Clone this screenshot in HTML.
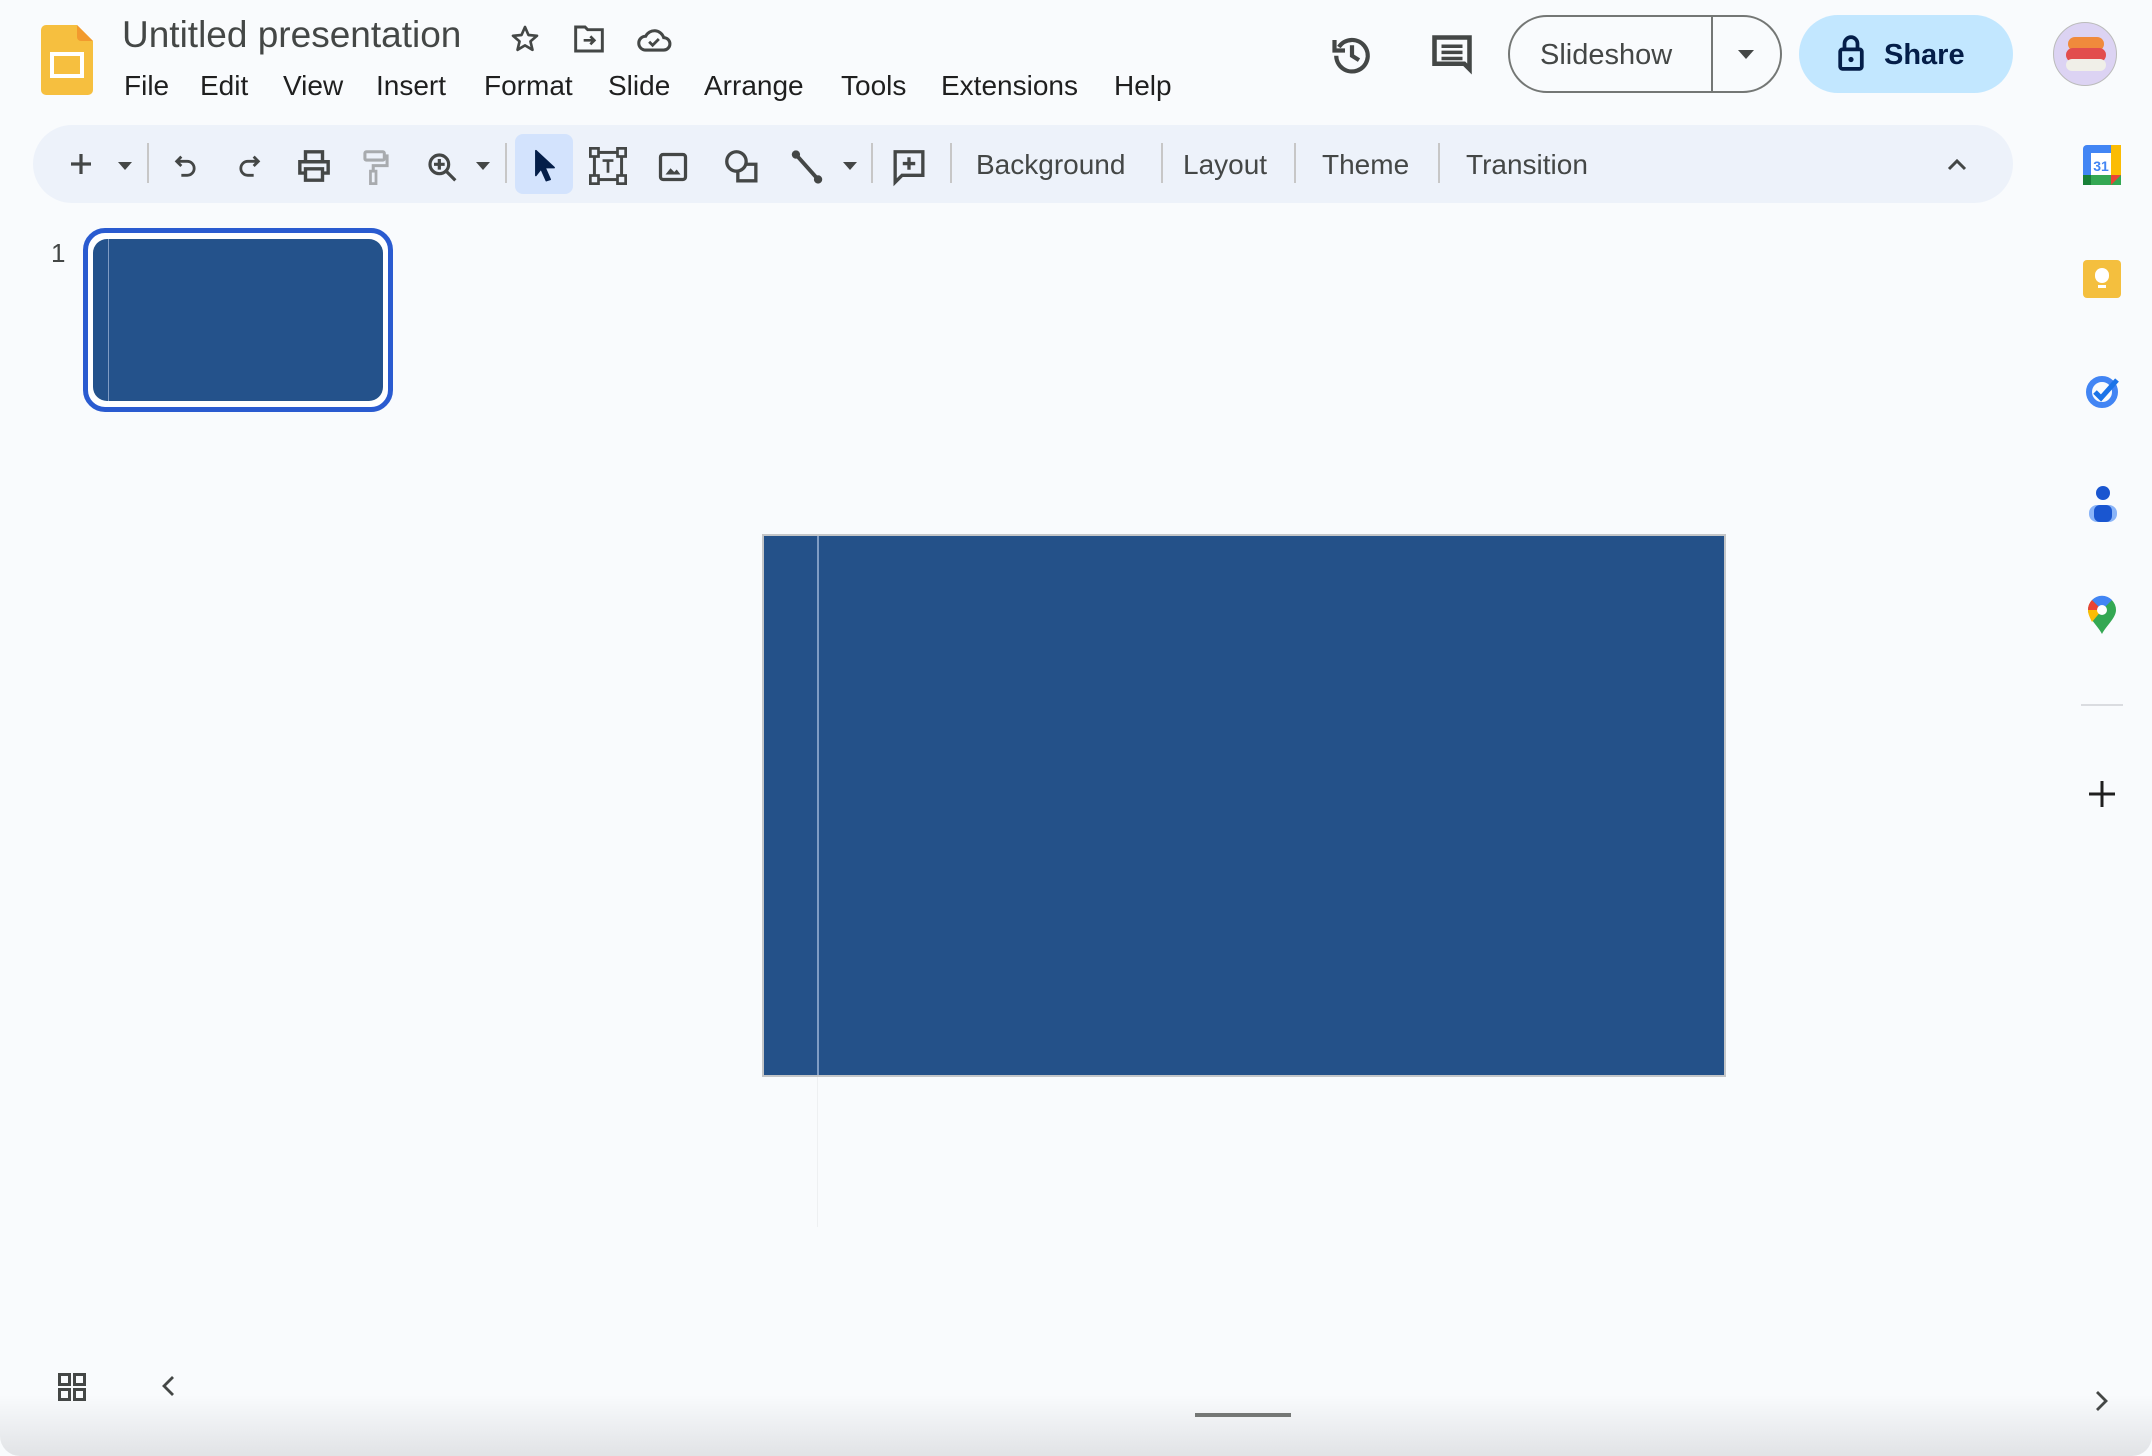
<!DOCTYPE html>
<html><head><meta charset="utf-8"><style>
*{margin:0;padding:0;box-sizing:border-box}
body{width:2152px;height:1456px;background:#f9fbfd;position:relative;overflow:hidden;font-family:"Liberation Sans",sans-serif;color:#1f1f1f}
.a{position:absolute}
.menu{position:absolute;top:70px;font-size:28px;color:#1f1f1f}
.tb{position:absolute;top:149px;font-size:28px;color:#444746}
.sep{position:absolute;top:143px;width:2px;height:40px;background:#c7c7c7}
svg{position:absolute;overflow:visible}
</style></head><body>
<svg style="left:41px;top:25px" width="52" height="70" viewBox="0 0 52 70"><path d="M5 0H36L52 16V65a5 5 0 0 1-5 5H5a5 5 0 0 1-5-5V5a5 5 0 0 1 5-5z" fill="#f6bf3f"/><path d="M36 0L52 16H40a4 4 0 0 1-4-4z" fill="#f29a2e"/><rect x="11" y="29" width="30" height="22" fill="none" stroke="#fff" stroke-width="4"/></svg>
<div class="a" style="left:122px;top:14px;font-size:37px;color:#444746">Untitled presentation</div>
<svg style="left:509px;top:23px" width="32" height="32" viewBox="0 0 24 24"><path d="M12 3l2.6 6 6.4.6-4.9 4.2 1.5 6.3L12 16.8 6.4 20.1l1.5-6.3L3 9.6l6.4-.6z" fill="none" stroke="#444746" stroke-width="2" stroke-linejoin="round"/></svg>
<svg style="left:573px;top:24px" width="32" height="30" viewBox="0 0 24 22"><path d="M2 2h7l2 2h11v16H2z" fill="none" stroke="#444746" stroke-width="2.2"/><path d="M8 12h8M13 9l3 3-3 3" fill="none" stroke="#444746" stroke-width="2"/></svg>
<svg style="left:636px;top:24px" width="36" height="30" viewBox="0 0 26 20"><path d="M7 18a5 5 0 0 1 0-10 7 7 0 0 1 13 1 4.5 4.5 0 0 1 0 9z" fill="none" stroke="#444746" stroke-width="2.2"/><path d="M9.5 12l2.5 2.5 4.5-4.5" fill="none" stroke="#444746" stroke-width="2"/></svg>
<div class="menu" style="left:124px">File</div>
<div class="menu" style="left:200px">Edit</div>
<div class="menu" style="left:283px">View</div>
<div class="menu" style="left:376px">Insert</div>
<div class="menu" style="left:484px">Format</div>
<div class="menu" style="left:608px">Slide</div>
<div class="menu" style="left:704px">Arrange</div>
<div class="menu" style="left:841px">Tools</div>
<div class="menu" style="left:941px">Extensions</div>
<div class="menu" style="left:1114px">Help</div>
<svg style="left:1330px;top:33px" width="44" height="42" viewBox="0 0 24 24"><path d="M4.5 8A9 9 0 1 1 3 13" fill="none" stroke="#444746" stroke-width="2.4"/><path d="M2 4v6h6" fill="none" stroke="#444746" stroke-width="2.4"/><path d="M12 7v6l4 2.5" fill="none" stroke="#444746" stroke-width="2.4"/></svg>
<svg style="left:1431px;top:34px" width="42" height="42" viewBox="0 0 24 24"><path d="M2 2h20v18l-3-3H2z" fill="none" stroke="#444746" stroke-width="2.6"/><path d="M6 7h12M6 10.5h12M6 14h12" stroke="#444746" stroke-width="2"/></svg>
<div class="a" style="left:1508px;top:15px;width:274px;height:78px;border:2px solid #747775;border-radius:39px"></div>
<div class="a" style="left:1711px;top:15px;width:2px;height:78px;background:#747775"></div>
<div class="a" style="left:1540px;top:39px;font-size:29px;color:#444746">Slideshow</div>
<div class="a" style="left:1738px;top:50px;width:0;height:0;border-left:8px solid transparent;border-right:8px solid transparent;border-top:9px solid #444746"></div>
<div class="a" style="left:1799px;top:15px;width:214px;height:78px;background:#c2e7ff;border-radius:39px"></div>
<svg style="left:1838px;top:35px" width="26" height="36" viewBox="0 0 18 25"><rect x="1.5" y="10" width="15" height="13.5" rx="1.5" fill="none" stroke="#041e49" stroke-width="2.6"/><path d="M4.5 10V6a4.5 4.5 0 0 1 9 0v4" fill="none" stroke="#041e49" stroke-width="2.6"/><circle cx="9" cy="17" r="1.8" fill="#041e49"/></svg>
<div class="a" style="left:1884px;top:39px;font-size:29px;font-weight:bold;color:#041e49">Share</div>
<div class="a" style="left:2053px;top:22px;width:64px;height:64px;border-radius:50%;background:#dcd3f3;border:1px solid #bbb;overflow:hidden">
<div class="a" style="left:14px;top:14px;width:36px;height:14px;border-radius:8px;background:#f08a3c"></div>
<div class="a" style="left:12px;top:25px;width:40px;height:14px;border-radius:8px;background:#e24d4d"></div>
<div class="a" style="left:12px;top:36px;width:40px;height:12px;border-radius:7px;background:#f0efe8"></div></div>
<div class="a" style="left:33px;top:125px;width:1980px;height:78px;background:#edf2fa;border-radius:39px"></div>
<div class="a" style="left:515px;top:134px;width:58px;height:60px;background:#d3e3fd;border-radius:8px"></div>
<svg style="left:69px;top:152px" width="24" height="24" viewBox="0 0 24 24"><path d="M12 2v20M2 12h20" stroke="#444746" stroke-width="3.2"/></svg>
<div class="a" style="left:118px;top:162px;border-left:7px solid transparent;border-right:7px solid transparent;border-top:8px solid #444746"></div>
<div class="sep" style="left:147px"></div>
<svg style="left:172px;top:152px" width="28" height="28" viewBox="0 0 24 24"><path d="M8 4L4 8l4 4M4 8h9a6 6 0 0 1 0 12H8" fill="none" stroke="#444746" stroke-width="2.4"/></svg>
<svg style="left:235px;top:152px" width="28" height="28" viewBox="0 0 24 24"><path d="M16 4l4 4-4 4M20 8h-9a6 6 0 0 0 0 12h5" fill="none" stroke="#444746" stroke-width="2.4"/></svg>
<svg style="left:297px;top:149px" width="34" height="34" viewBox="0 0 24 24"><path d="M6 8V2h12v6M6 17H2V9h20v8h-4M6 14h12v8H6z" fill="none" stroke="#444746" stroke-width="2.4"/></svg>
<svg style="left:362px;top:149px" width="28" height="36" viewBox="0 0 20 26"><rect x="2" y="2" width="14" height="6" rx="1" fill="none" stroke="#a8abae" stroke-width="2.2"/><path d="M16 5h2v7H8v4" fill="none" stroke="#a8abae" stroke-width="2.2"/><rect x="6" y="16" width="4" height="9" fill="none" stroke="#a8abae" stroke-width="2"/></svg>
<svg style="left:426px;top:150px" width="32" height="34" viewBox="0 0 24 24"><circle cx="10" cy="10" r="7" fill="none" stroke="#444746" stroke-width="2.4"/><path d="M15 15l7 7M10 6v8M6 10h8" stroke="#444746" stroke-width="2.4"/></svg>
<div class="a" style="left:476px;top:162px;border-left:7px solid transparent;border-right:7px solid transparent;border-top:8px solid #444746"></div>
<div class="sep" style="left:505px"></div>
<svg style="left:531px;top:148px" width="28" height="34" viewBox="0 0 20 26"><path d="M3 2l14 13h-7l4 9-3 1-4-9-4 5z" fill="#041e49" stroke="#041e49" stroke-width="1.2" stroke-linejoin="round"/></svg>
<svg style="left:589px;top:147px" width="38" height="38" viewBox="0 0 28 28"><rect x="4" y="4" width="20" height="20" fill="none" stroke="#444746" stroke-width="2.2"/><rect x="1" y="1" width="6" height="6" fill="#edf2fa" stroke="#444746" stroke-width="2"/><rect x="21" y="1" width="6" height="6" fill="#edf2fa" stroke="#444746" stroke-width="2"/><rect x="1" y="21" width="6" height="6" fill="#edf2fa" stroke="#444746" stroke-width="2"/><rect x="21" y="21" width="6" height="6" fill="#edf2fa" stroke="#444746" stroke-width="2"/><path d="M10 10h8M14 10v9" stroke="#444746" stroke-width="2"/></svg>
<svg style="left:658px;top:151px" width="30" height="32" viewBox="0 0 24 24"><rect x="2" y="2" width="20" height="20" rx="2" fill="none" stroke="#444746" stroke-width="2.6"/><path d="M6 18l4-5 3 3 2-2 3 4z" fill="#444746"/></svg>
<svg style="left:724px;top:149px" width="36" height="36" viewBox="0 0 26 26"><circle cx="9" cy="9" r="7" fill="none" stroke="#444746" stroke-width="2.4"/><path d="M16 11h7v12H10v-6" fill="none" stroke="#444746" stroke-width="2.4"/></svg>
<svg style="left:790px;top:149px" width="34" height="36" viewBox="0 0 24 26"><path d="M4 4l16 18" stroke="#444746" stroke-width="2.8"/><circle cx="4" cy="4" r="3" fill="#444746"/><circle cx="20" cy="22" r="3" fill="#444746"/></svg>
<div class="a" style="left:843px;top:162px;border-left:7px solid transparent;border-right:7px solid transparent;border-top:8px solid #444746"></div>
<div class="sep" style="left:871px"></div>
<svg style="left:892px;top:149px" width="34" height="36" viewBox="0 0 24 26"><path d="M2 2h20v17H7l-5 5z" fill="none" stroke="#444746" stroke-width="2.4"/><path d="M12 6v9M7.5 10.5h9" stroke="#444746" stroke-width="2.4"/></svg>
<div class="sep" style="left:950px"></div>
<div class="tb" style="left:976px">Background</div>
<div class="sep" style="left:1161px"></div>
<div class="tb" style="left:1183px">Layout</div>
<div class="sep" style="left:1294px"></div>
<div class="tb" style="left:1322px">Theme</div>
<div class="sep" style="left:1438px"></div>
<div class="tb" style="left:1466px">Transition</div>
<svg style="left:1947px;top:157px" width="20" height="14" viewBox="0 0 20 14"><path d="M2 12l8-8 8 8" fill="none" stroke="#444746" stroke-width="3"/></svg>
<svg style="left:2083px;top:145px" width="38" height="40" viewBox="0 0 38 40"><rect width="38" height="40" rx="4" fill="#4285f4"/><rect x="0" y="30" width="38" height="10" fill="#34a853"/><rect x="28" y="0" width="10" height="30" fill="#fbbc04"/><path d="M28 30h10l-10 10z" fill="#ea4335"/><rect x="0" y="30" width="8" height="10" fill="#188038"/><rect x="8" y="8" width="20" height="22" fill="#fff"/><text x="18" y="26" font-size="14" font-family="Liberation Sans" font-weight="bold" fill="#4285f4" text-anchor="middle">31</text></svg>
<div class="a" style="left:2083px;top:260px;width:38px;height:38px;background:#f4bf3e;border-radius:4px"></div>
<div class="a" style="left:2095px;top:268px;width:14px;height:15px;background:#fff;border-radius:7px"></div>
<div class="a" style="left:2098px;top:285px;width:8px;height:3px;background:#fff"></div>
<svg style="left:2085px;top:373px" width="38" height="36" viewBox="0 0 38 36"><circle cx="17" cy="19" r="13" fill="none" stroke="#4285f4" stroke-width="6"/><path d="M10 19l6 6 16-18" fill="none" stroke="#1a73e8" stroke-width="5"/></svg>
<svg style="left:2087px;top:484px" width="32" height="40" viewBox="0 0 32 40"><circle cx="16" cy="9" r="7" fill="#1a56d0"/><rect x="2" y="21" width="28" height="17" rx="8" fill="#8ab4f8"/><rect x="7" y="21" width="18" height="17" rx="6" fill="#1a56d0"/></svg>
<svg style="left:2088px;top:596px" width="28" height="38" viewBox="0 0 28 38"><path d="M14 38C10 30 0 22 0 14a14 14 0 0 1 28 0c0 8-10 16-14 24z" fill="#34a853"/><path d="M0 14a14 14 0 0 1 4-10l10 10H0z" fill="#ea4335"/><path d="M4 4a14 14 0 0 1 20 0L14 14z" fill="#4285f4"/><path d="M0 14h14L4 26C2 22 0 18 0 14z" fill="#fbbc04"/><circle cx="14" cy="14" r="5" fill="#fff"/></svg>
<div class="a" style="left:2081px;top:704px;width:42px;height:2px;background:#dadce0"></div>
<svg style="left:2088px;top:780px" width="28" height="28" viewBox="0 0 28 28"><path d="M14 1v26M1 14h26" stroke="#1f1f1f" stroke-width="3"/></svg>
<div class="a" style="left:51px;top:238px;font-size:26px;color:#444746">1</div>
<div class="a" style="left:83px;top:228px;width:310px;height:184px;border:5px solid #2a5bd0;border-radius:22px;background:#fff"></div>
<div class="a" style="left:93px;top:239px;width:290px;height:162px;background:#24528b;border-radius:14px;overflow:hidden"><div class="a" style="left:15px;top:0;width:1px;height:162px;background:#7f9cc4"></div></div>
<div class="a" style="left:762px;top:534px;width:964px;height:543px;background:#245189;border:2px solid #c4c6c8"></div>
<div class="a" style="left:817px;top:536px;width:2px;height:539px;background:#7f9cc4"></div>
<div class="a" style="left:817px;top:1077px;width:1px;height:150px;background:#eef0f2"></div>
<div class="a" style="left:0;top:1395px;width:2152px;height:61px;background:linear-gradient(#f9fbfd,#e1e3e6);border-radius:0 0 20px 20px"></div>
<svg style="left:57px;top:1372px" width="30" height="30" viewBox="0 0 24 24"><rect x="2" y="2" width="8" height="8" fill="none" stroke="#444746" stroke-width="2.4"/><rect x="14" y="2" width="8" height="8" fill="none" stroke="#444746" stroke-width="2.4"/><rect x="2" y="14" width="8" height="8" fill="none" stroke="#444746" stroke-width="2.4"/><rect x="14" y="14" width="8" height="8" fill="none" stroke="#444746" stroke-width="2.4"/></svg>
<svg style="left:161px;top:1375px" width="14" height="22" viewBox="0 0 14 22"><path d="M12 2L3 11l9 9" fill="none" stroke="#444746" stroke-width="2.8"/></svg>
<div class="a" style="left:1195px;top:1413px;width:96px;height:4px;background:#747775"></div>
<svg style="left:2095px;top:1390px" width="14" height="22" viewBox="0 0 14 22"><path d="M2 2l9 9-9 9" fill="none" stroke="#444746" stroke-width="2.8"/></svg>
</body></html>
